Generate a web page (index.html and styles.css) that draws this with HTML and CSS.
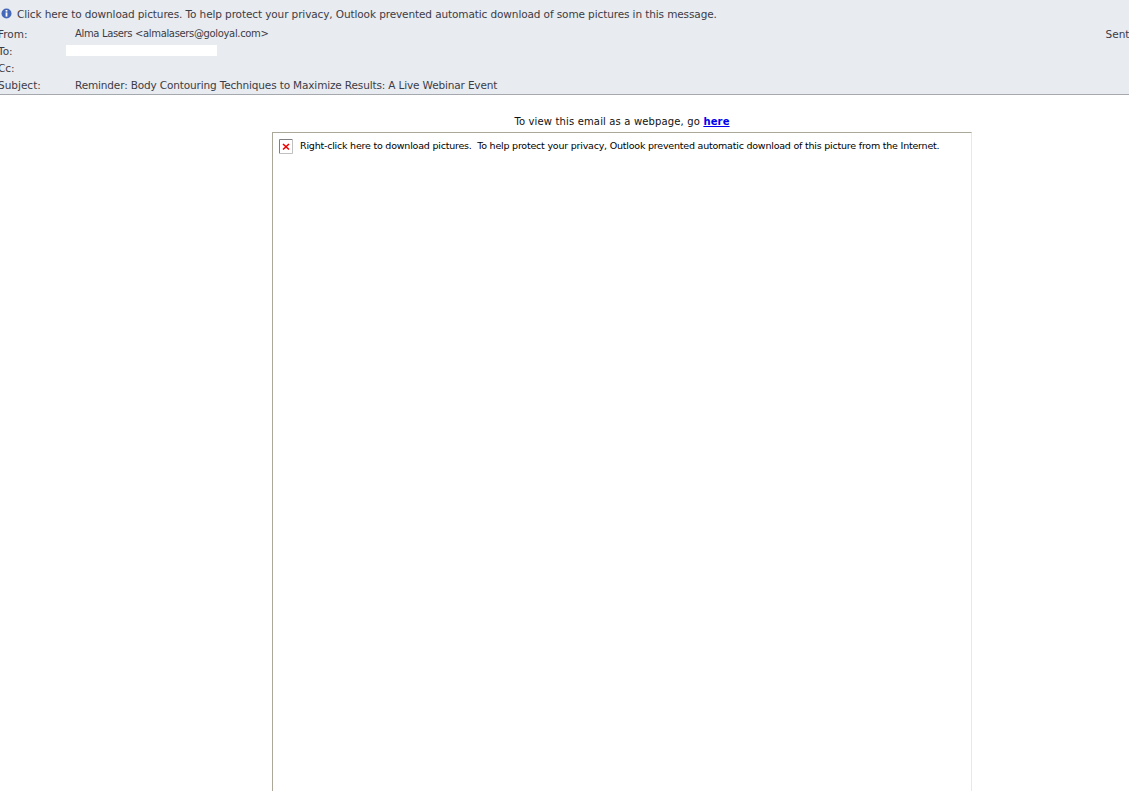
FILE: index.html
```
<!DOCTYPE html>
<html lang="en">
<head>
<meta charset="utf-8">
<title>Reminder: Body Contouring Techniques</title>
<link rel="stylesheet" href="styles.css">
</head>
<body>
<header class="mail-header">
  <div class="notice">
    <svg class="info-icon" width="11" height="11" viewBox="0 0 11 11"><circle cx="5.5" cy="5.5" r="5" fill="#4668b8"/><rect x="4.6" y="2" width="1.8" height="1.6" fill="#fff"/><rect x="4.6" y="4.4" width="1.8" height="4.2" fill="#fff"/></svg>
    <span>Click here to download pictures. To help protect your privacy, Outlook prevented automatic download of some pictures in this message.</span>
  </div>
  <div class="row">
    <span class="label">From:</span>
    <span class="value narrow">Alma Lasers &lt;almalasers@goloyal.com&gt;</span>
    <span class="sent">Sent:</span>
  </div>
  <div class="row"><span class="label">To:</span><span class="redacted"></span></div>
  <div class="row"><span class="label">Cc:</span></div>
  <div class="row"><span class="label">Subject:</span><span class="value subject">Reminder: Body Contouring Techniques to Maximize Results: A Live Webinar Event</span></div>
</header>
<main class="mail-body">
  <p class="webview">To view this email as a webpage, go <a href="#">here</a></p>
  <div class="picture">
    <svg class="broken" width="14" height="15" viewBox="0 0 14 15"><path d="M0.5 14.500V0.5H13.500" fill="none" stroke="#808080"/><path d="M13.500 0.5V14.500H0.500" fill="none" stroke="#c0c0c0"/><path d="M4 5l6 5.500M10 5l-6 5.500" stroke="#f00000" stroke-width="1.600" fill="none"/></svg>
    <span>Right-click here to download pictures.&nbsp; To help protect your privacy, Outlook prevented automatic download of this picture from the Internet.</span>
  </div>
</main>
</body>
</html>
```
FILE: styles.css
```
html, body { margin: 0; padding: 0; height: 100%; overflow: hidden; background: #fff; }
body { font-family: "DejaVu Sans", sans-serif; font-size: 10px; color: #222; }
.mail-header { height: 90px; background: #e8ebf0; border-bottom: 1px solid #a5a8ac; display: flex; flex-direction: column; padding-top: 4px; color: #3c3c46; }
.notice { flex: none; height: 19px; padding-bottom: 2px; display: flex; align-items: center; gap: 5px; padding-left: 1px; font-size: 10.5px; letter-spacing: -0.11px; white-space: nowrap; }
.row { flex: none; height: 17px; display: flex; align-items: center; font-size: 10.5px; }
.label { width: 77px; margin-left: -2px; flex: none; }
.value { white-space: nowrap; }
.narrow { font-size: 10px; letter-spacing: -0.35px; }
.subject { letter-spacing: -0.15px; }
.sent { margin-left: auto; margin-right: -4px; }
.redacted { width: 151px; height: 11px; background: #fff; margin-left: -9px; }
.mail-body { display: flex; flex-direction: column; align-items: center; padding-left: 115px; }
.webview { margin: 0; height: 37px; line-height: 1; padding-top: 22px; box-sizing: border-box; font-size: 10px; color: #111; letter-spacing: 0.15px; white-space: nowrap; }
.webview a { color: #0000ee; font-weight: bold; }
.picture { width: 700px; height: 700px; flex: none; box-sizing: border-box; border: 1px solid; border-color: #aca899 #ece9d8 #ece9d8 #aca899; display: flex; align-items: flex-start; gap: 7px; padding: 6px; color: #000; font-size: 9.5px; letter-spacing: -0.215px; line-height: 13px; white-space: nowrap; }
.broken { flex: none; }
```
